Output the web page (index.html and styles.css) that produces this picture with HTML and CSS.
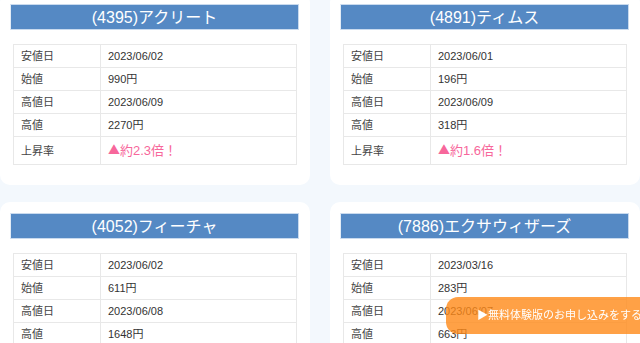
FILE: index.html
```html
<!DOCTYPE html>
<html lang="ja">
<head>
<meta charset="utf-8">
<link rel="stylesheet" href="styles.css">
</head>
<body>
<main class="grid">
  <section class="card">
    <h2 class="card-title">(4395)アクリート</h2>
    <table class="stock">
      <tr><th>安値日</th><td>2023/06/02</td></tr>
      <tr><th>始値</th><td>990円</td></tr>
      <tr><th>高値日</th><td>2023/06/09</td></tr>
      <tr><th>高値</th><td>2270円</td></tr>
      <tr class="rate"><th>上昇率</th><td><span class="mark">▲</span>約2.3倍！</td></tr>
    </table>
  </section>
  <section class="card">
    <h2 class="card-title">(4891)ティムス</h2>
    <table class="stock">
      <tr><th>安値日</th><td>2023/06/01</td></tr>
      <tr><th>始値</th><td>196円</td></tr>
      <tr><th>高値日</th><td>2023/06/09</td></tr>
      <tr><th>高値</th><td>318円</td></tr>
      <tr class="rate"><th>上昇率</th><td><span class="mark">▲</span>約1.6倍！</td></tr>
    </table>
  </section>
  <section class="card">
    <h2 class="card-title">(4052)フィーチャ</h2>
    <table class="stock">
      <tr><th>安値日</th><td>2023/06/02</td></tr>
      <tr><th>始値</th><td>611円</td></tr>
      <tr><th>高値日</th><td>2023/06/08</td></tr>
      <tr><th>高値</th><td>1648円</td></tr>
      <tr class="rate"><th>上昇率</th><td><span class="mark">▲</span>約2.7倍！</td></tr>
    </table>
  </section>
  <section class="card">
    <h2 class="card-title">(7886)エクサウィザーズ</h2>
    <table class="stock">
      <tr><th>安値日</th><td>2023/03/16</td></tr>
      <tr><th>始値</th><td>283円</td></tr>
      <tr><th>高値日</th><td>2023/06/07</td></tr>
      <tr><th>高値</th><td>663円</td></tr>
      <tr class="rate"><th>上昇率</th><td><span class="mark">▲</span>約2.3倍！</td></tr>
    </table>
  </section>
</main>
<a class="trial" href="#">▶無料体験版のお申し込みをする</a>
</body>
</html>
```

FILE: styles.css
```css
html, body {
  margin: 0;
  padding: 0;
}
body {
  background: #f3f8fd;
  font-family: "Liberation Sans", "Noto Sans CJK JP", sans-serif;
  color: #333;
  overflow: hidden;
}
.grid {
  display: grid;
  grid-template-columns: 310px 310px;
  column-gap: 20px;
  row-gap: 17px;
  margin-top: -7px;
}
.card {
  background: #fff;
  border-radius: 10px;
  padding: 11px 10px 20px;
}
.card-title {
  margin: 0;
  height: 26px;
  line-height: 26px;
  background: #5589c4;
  border: 1px solid #c9daee;
  border-left-color: #e3ecf6;
  box-sizing: border-box;
  margin-right: 1px;
  color: #fff;
  font-size: 16px;
  font-weight: normal;
  text-align: center;
}
.stock {
  margin: 14px 3px 0;
  width: calc(100% - 6px);
  border-collapse: collapse;
  font-size: 11px;
}
.stock th,
.stock td {
  border: 1px solid #e8e8e8;
  padding: 5px 7px;
  line-height: 12px;
  text-align: left;
  font-weight: normal;
  color: #333;
}
.stock th {
  width: 72px;
  color: #444;
}
.rate td {
  font-size: 13px;
  line-height: 16px;
  color: #f7679b;
}
.mark {
  font-family: "Noto Sans CJK JP", sans-serif;
  font-size: 12px;
}
.trial {
  position: fixed;
  left: 446px;
  right: -30px;
  bottom: 9px;
  height: 37px;
  line-height: 37px;
  padding-left: 31px;
  border-radius: 12px;
  background: rgba(255, 138, 24, 0.8);
  color: #fff;
  font-size: 11px;
  text-decoration: none;
  white-space: nowrap;
}
```
